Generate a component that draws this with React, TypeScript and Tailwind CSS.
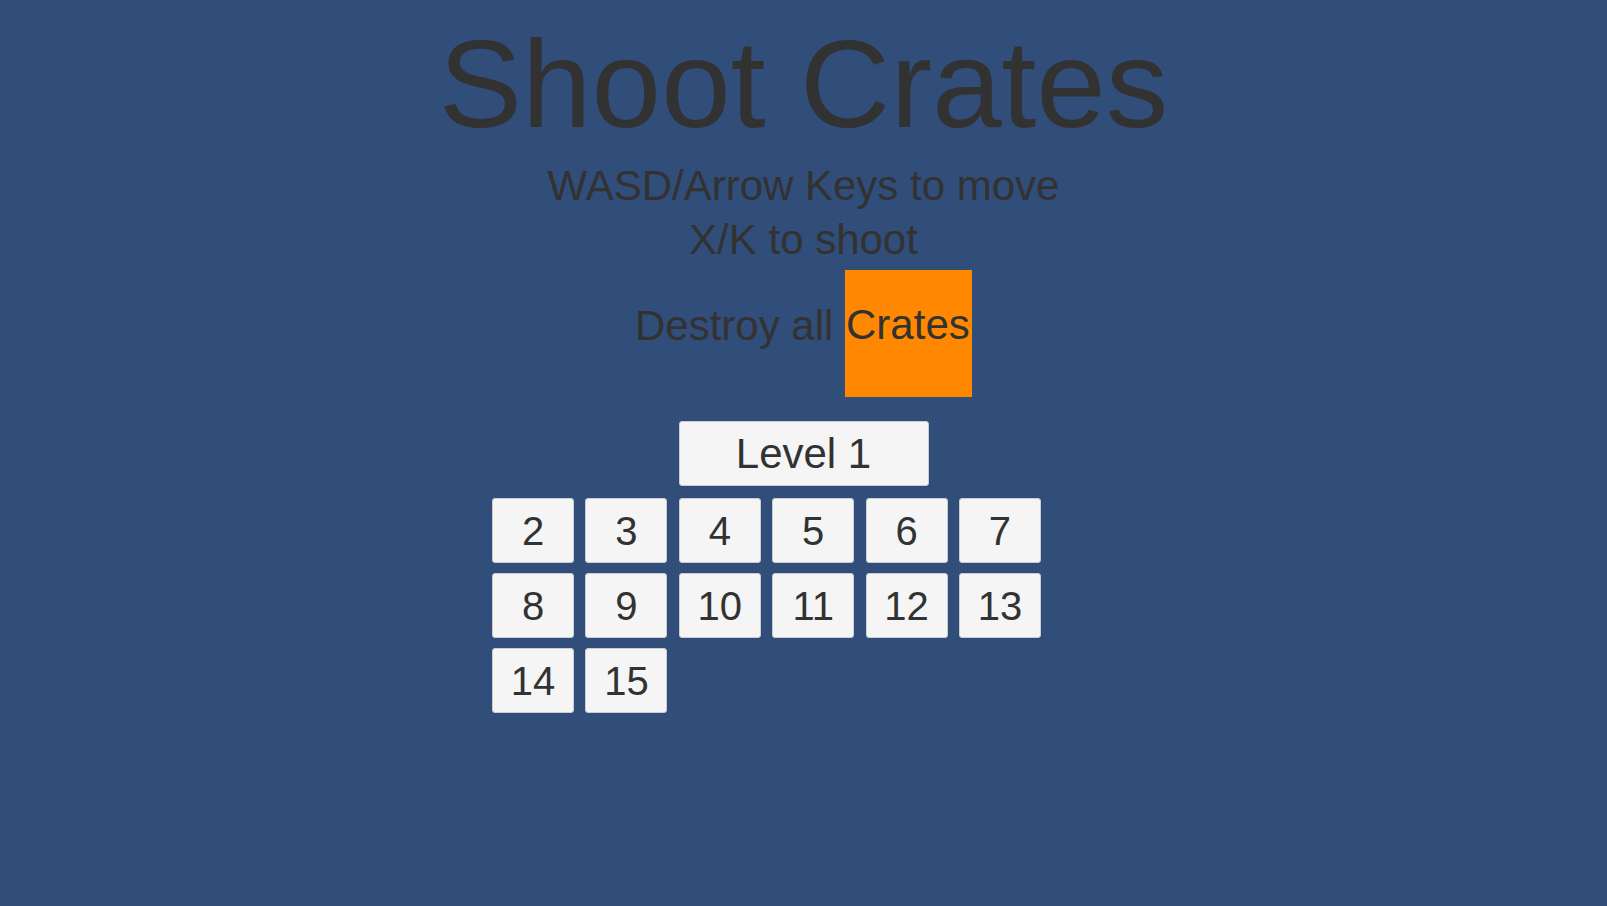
import React from 'react';

const levels = [2, 3, 4, 5, 6, 7, 8, 9, 10, 11, 12, 13, 14, 15];

export default function App() {
  return (
    <div className="min-h-screen w-full bg-[#314d79] text-[#323232] font-['Liberation_Sans',Arial,sans-serif] flex flex-col items-center pt-[21px]">
      {/* Title */}
      <h1 className="text-[125px] leading-none font-normal whitespace-nowrap">Shoot Crates</h1>

      {/* Controls */}
      <div className="mt-[13px] text-[42px] leading-[54px] text-center whitespace-nowrap">
        <p>WASD/Arrow Keys to move</p>
        <p>X/K to shoot</p>
      </div>

      {/* Goal */}
      <div className="mt-[3px] flex items-start">
        <span className="mt-[35px] text-[42px] leading-none whitespace-pre">Destroy all </span>
        <div className="w-[127px] h-[127px] bg-[#ff8800] pt-[34px] pl-[1px]">
          <span className="text-[42px] leading-none block">Crates</span>
        </div>
      </div>

      {/* Level select */}
      <button className="mt-[24px] w-[250px] h-[65px] bg-[#f5f5f5] border border-[#cdcdcd] rounded-[3px] flex items-center justify-center text-[42px] leading-none text-[#323232]">
        Level 1
      </button>

      <div className="w-[623px] mt-[12px]">
        <div className="grid grid-cols-[repeat(6,82px)] gap-x-[11.4px] gap-y-[10px]">
          {levels.map((n) => (
            <button
              key={n}
              className="h-[65px] bg-[#f5f5f5] border border-[#cdcdcd] rounded-[3px] flex items-center justify-center text-[40px] leading-none text-[#323232]"
            >
              {n}
            </button>
          ))}
        </div>
      </div>
    </div>
  );
}
